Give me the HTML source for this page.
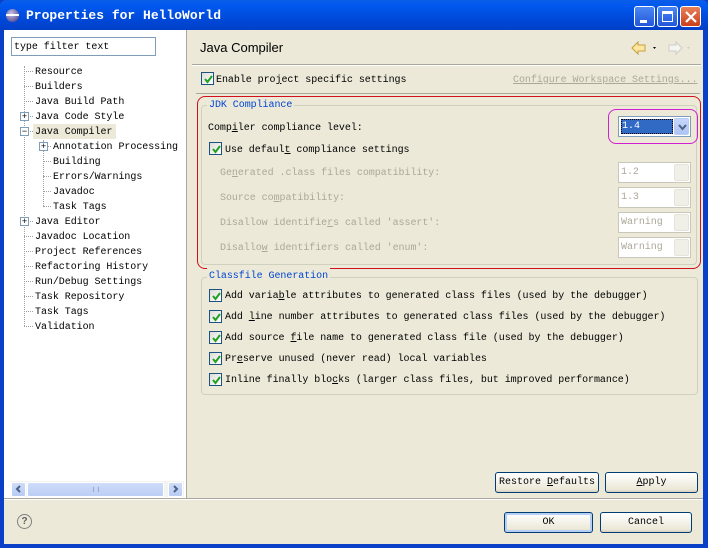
<!DOCTYPE html>
<html><head><meta charset="utf-8">
<style>
*{margin:0;padding:0;box-sizing:border-box}
body{width:708px;height:548px;position:relative;overflow:hidden;background:#0a3fc8;font-family:"Liberation Mono",monospace}
.a{position:absolute}
.t{position:absolute;font:10px/14px "Liberation Mono",monospace;letter-spacing:-0.05px;white-space:pre;color:#000;padding-top:2px}
.g{color:#aca899}
.u{text-decoration:underline}
.cb{position:absolute;width:13px;height:13px;border:1px solid #1c5180;background:linear-gradient(135deg,#dcdcd7,#fff)}
.cb svg{position:absolute;left:1px;top:1px}
.btn{position:absolute;height:21px;border:1px solid #003c74;border-radius:3px;background:linear-gradient(#fff,#ece9d8 85%,#d6d0c0);font:10px/20px "Liberation Mono",monospace;text-align:center}
.combo{position:absolute;height:21px;border:1px solid #c9c7ba;background:#fff}
.combo .ar{position:absolute;right:1px;top:1px;width:15px;height:17px;border-radius:2px;background:#f0efe8;border:1px solid #e6e4d8}
.dl{position:absolute;border-top:1px dotted #a0a0a0}
.dv{position:absolute;border-left:1px dotted #a0a0a0}
.pm{position:absolute;width:9px;height:9px;border:1px solid #7f9db9;background:#fff;font:9px/7px "Liberation Sans";text-align:center;color:#000}
</style></head><body>
<div class="a" style="left:0;top:0;width:708px;height:30px;background:linear-gradient(#0a5ee8,#0058ee 20%,#0047d6 70%,#0040c8);border-radius:6px 6px 0 0"></div>
<div class="a" style="left:6px;top:9px;width:13px;height:13px;border-radius:50%;background:radial-gradient(circle at 40% 35%,#c8c0e8,#3a2f7e)"></div>
<div class="a" style="left:6px;top:14px;width:13px;height:2px;background:#fff"></div>
<div class="a" style="left:26px;top:8px;font:bold 13px/15px 'Liberation Mono',monospace;color:#fff">Properties for HelloWorld</div>
<div class="a" style="left:634px;top:6px;width:21px;height:21px;border:1px solid #fff;border-radius:3px;background:linear-gradient(#4b87f4,#2256d8)"><div class="a" style="left:5px;top:13px;width:7px;height:3px;background:#fff"></div></div>
<div class="a" style="left:657px;top:6px;width:21px;height:21px;border:1px solid #fff;border-radius:3px;background:linear-gradient(#4b87f4,#2256d8)"><div class="a" style="left:4px;top:4px;width:11px;height:11px;border:1px solid #fff;border-top-width:3px"></div></div>
<div class="a" style="left:680px;top:6px;width:21px;height:21px;border:1px solid #fff;border-radius:3px;background:linear-gradient(#e8805a,#c8401a)"><svg class="a" style="left:4px;top:4px" width="12" height="12"><path d="M1 1L11 11M11 1L1 11" stroke="#fff" stroke-width="2.2"/></svg></div>
<div class="a" style="left:4px;top:30px;width:699px;height:514px;background:#ece9d8"></div>
<div class="a" style="left:4px;top:30px;width:183px;height:468px;background:#fff;border-right:1px solid #aca899"></div>
<div class="a" style="left:11px;top:37px;width:145px;height:19px;border:1px solid #7f9db9;background:#fff"></div>
<div class="t" style="left:14px;top:39px">type filter text</div>
<div class="a" style="left:33px;top:124px;width:83px;height:15px;background:#ece9d8"></div>
<div class="dv" style="left:24px;top:66px;height:260px"></div>
<div class="dv" style="left:43px;top:140px;height:66px"></div>
<div id="tree"></div>
<div class="a" style="left:11px;top:481px;width:173px;height:16px;background:#f3f3ef"></div>
<div class="a" style="left:11px;top:482px;width:15px;height:15px;border-radius:2px;background:linear-gradient(#cfdcf9,#b8cbf4);border:1px solid #fff"></div>
<div class="a" style="left:27px;top:482px;width:137px;height:15px;border-radius:2px;background:linear-gradient(#cfdcf9,#bccff5);border:1px solid #fff"></div>
<div class="a" style="left:168px;top:482px;width:15px;height:15px;border-radius:2px;background:linear-gradient(#cfdcf9,#b8cbf4);border:1px solid #fff"></div>
<svg class="a" style="left:14px;top:484px" width="10" height="10"><path d="M6 2L3 5L6 8" stroke="#4d6185" stroke-width="2" fill="none"/></svg>
<svg class="a" style="left:171px;top:484px" width="10" height="10"><path d="M3 2L6 5L3 8" stroke="#4d6185" stroke-width="2" fill="none"/></svg>
<div class="a" style="left:93px;top:487px;width:6px;height:5px;border-left:1px solid #8fa8d8;border-right:1px solid #8fa8d8"></div>
<div class="a" style="left:200px;top:40px;font:13px/16px 'Liberation Sans',sans-serif;color:#000">Java Compiler</div>
<svg class="a" style="left:630px;top:40px" width="60" height="16"><path d="M2 8L8 2V5H15V11H8V14Z" fill="#fde6a0" stroke="#c8a040"/><path d="M23 7L26 7L24.5 9Z" fill="#000"/><path d="M52 8L46 2V5H39V11H46V14Z" fill="#f4f4f0" stroke="#ccc"/><path d="M57 7L60 7L58.5 9Z" fill="#ccc"/></svg>
<div class="a" style="left:192px;top:64px;width:509px;height:1px;background:#aca899"></div>
<div class="a" style="left:192px;top:65px;width:509px;height:1px;background:#fff"></div>
<div class="cb" style="left:201px;top:72px"><svg width="11" height="11"><path d="M2 5L4.5 8L9 2" stroke="#21a121" stroke-width="2" fill="none"/></svg></div>
<div class="t" style="left:216px;top:72px">Enable pro<span class="u">j</span>ect specific settings</div>
<div class="t g u" style="left:513px;top:72px">Configure Workspace Settings...</div>
<div class="a" style="left:196px;top:93px;width:504px;height:1px;background:#aca899"></div>
<div class="a" style="left:201px;top:105px;width:496px;height:160px;border:1px solid #d0d0bf;border-radius:4px"></div>
<div class="a" style="left:197px;top:96px;width:504px;height:173px;border:1px solid #d0101a;border-radius:8px"></div>
<div class="t" style="left:207px;top:97px;color:#0046d5;background:#ece9d8;padding:2px 2px 0">JDK Compliance</div>
<div class="t" style="left:208px;top:120px">Comp<span class="u">i</span>ler compliance level:</div>
<div class="a" style="left:608px;top:109px;width:90px;height:35px;border:1px solid #d020d0;border-radius:8px"></div>
<div class="combo" style="left:618px;top:116px;width:73px;border-color:#7f9db9"><div class="a" style="left:2px;top:2px;width:52px;height:15px;background:#316ac5;border:1px dotted #000;color:#fff;font:10px/14px 'Liberation Mono'">1.4</div><div class="ar" style="background:linear-gradient(#c6d6fb,#aec4f6);border-color:#b8ccf5"><svg class="a" style="left:3px;top:5px" width="9" height="7"><path d="M1 1L4.5 5L8 1" stroke="#4d6185" stroke-width="2" fill="none"/></svg></div></div>
<div class="cb" style="left:209px;top:142px"><svg width="11" height="11"><path d="M2 5L4.5 8L9 2" stroke="#21a121" stroke-width="2" fill="none"/></svg></div>
<div class="t" style="left:225px;top:142px">Use defaul<span class="u">t</span> compliance settings</div>
<div class="t g" style="left:220px;top:165px">Ge<span class="u">n</span>erated .class files compatibility:</div>
<div class="t g" style="left:220px;top:190px">Source co<span class="u">m</span>patibility:</div>
<div class="t g" style="left:220px;top:215px">Disallow identifie<span class="u">r</span>s called 'assert':</div>
<div class="t g" style="left:220px;top:240px">Disallo<span class="u">w</span> identifiers called 'enum':</div>
<div class="combo" style="left:618px;top:162px;width:73px"><div class="t g" style="left:2px;top:1px">1.2</div><div class="ar"></div></div>
<div class="combo" style="left:618px;top:187px;width:73px"><div class="t g" style="left:2px;top:1px">1.3</div><div class="ar"></div></div>
<div class="combo" style="left:618px;top:212px;width:73px"><div class="t g" style="left:2px;top:1px">Warning</div><div class="ar"></div></div>
<div class="combo" style="left:618px;top:237px;width:73px"><div class="t g" style="left:2px;top:1px">Warning</div><div class="ar"></div></div>
<div class="a" style="left:201px;top:277px;width:497px;height:118px;border:1px solid #d0d0bf;border-radius:4px"></div>
<div class="t" style="left:207px;top:268px;color:#0046d5;background:#ece9d8;padding:2px 2px 0">Classfile Generation</div>
<div id="cf"></div>
<div class="btn" style="left:495px;top:472px;width:104px">Restore <span class="u">D</span>efaults</div>
<div class="btn" style="left:605px;top:472px;width:93px"><span class="u">A</span>pply</div>
<div class="a" style="left:4px;top:498px;width:699px;height:1px;background:#aca899"></div>
<div class="a" style="left:4px;top:499px;width:699px;height:1px;background:#fff"></div>
<div class="a" style="left:17px;top:514px;width:15px;height:15px;border:1px solid #808080;border-radius:50%;font:bold 10px/13px 'Liberation Sans';text-align:center;color:#606060">?</div>
<div class="btn" style="left:504px;top:512px;width:89px;box-shadow:inset 0 0 0 2px #b8cff5">OK</div>
<div class="btn" style="left:600px;top:512px;width:92px">Cancel</div>
<script>
var items=[["Resource",0],["Builders",0],["Java Build Path",0],["Java Code Style",0,1,'+'],["Java Compiler",0,1,'−'],["Annotation Processing",1,1,'+'],["Building",1],["Errors/Warnings",1],["Javadoc",1],["Task Tags",1],["Java Editor",0,1,'+'],["Javadoc Location",0],["Project References",0],["Refactoring History",0],["Run/Debug Settings",0],["Task Repository",0],["Task Tags",0],["Validation",0]];
var h='';items.forEach(function(it,i){var y=71+i*15;var x=it[1]?53:35;var lx=it[1]?43:24;
h+='<div class="dl" style="left:'+lx+'px;top:'+y+'px;width:'+(x-lx-2)+'px"></div>';
if(it[2])h+='<div class="pm" style="left:'+(lx-4)+'px;top:'+(y-4)+'px">'+it[3]+'</div>';
h+='<div class="t" style="left:'+x+'px;top:'+(y-7)+'px">'+it[0]+'</div>';});
document.getElementById('tree').innerHTML=h;
var c=['Add varia<span class="u">b</span>le attributes to generated class files (used by the debugger)','Add <span class="u">l</span>ine number attributes to generated class files (used by the debugger)','Add source <span class="u">f</span>ile name to generated class file (used by the debugger)','Pr<span class="u">e</span>serve unused (never read) local variables','Inline finally blo<span class="u">c</span>ks (larger class files, but improved performance)'];
var s='';c.forEach(function(t,i){var y=295+i*21;s+='<div class="cb" style="left:209px;top:'+(y-6)+'px"><svg width="11" height="11"><path d="M2 5L4.5 8L9 2" stroke="#21a121" stroke-width="2" fill="none"/></svg></div><div class="t" style="left:225px;top:'+(y-7)+'px">'+t+'</div>';});
document.getElementById('cf').innerHTML=s;
</script>
</body></html>
